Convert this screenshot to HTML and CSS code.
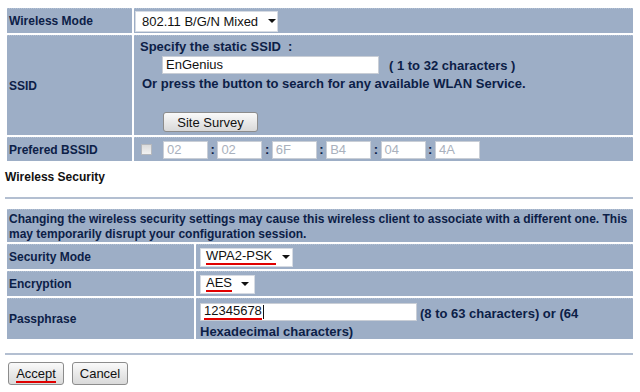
FILE: index.html
```html
<!DOCTYPE html>
<html>

<head>
    <meta charset="utf-8">
    <meta name="viewport" content="width=device-width">
    <title>Wireless Settings</title>
    <link rel="stylesheet" href="styles.css">
</head>

<body>
    <table class="grid basic">
        <colgroup>
            <col class="col-label">
            <col>
        </colgroup>
        <tr class="row-mode">
            <td class="label">Wireless Mode</td>
            <td class="value">
                <div class="select mode-select"><span>802.11 B/G/N Mixed</span><i class="arrow"></i></div>
            </td>
        </tr>
        <tr class="row-ssid">
            <td class="label">SSID</td>
            <td class="value ssid-cell">
                <div class="ssid-hint">Specify the static SSID &nbsp;:</div>
                <div class="ssid-line">
                    <div class="textbox ssid-box">EnGenius</div>
                    <span class="ssid-range">( 1 to 32 characters )</span>
                </div>
                <div class="ssid-note">Or press the button to search for any available WLAN Service.</div>
                <button class="btn survey">Site Survey</button>
            </td>
        </tr>
        <tr class="row-bssid">
            <td class="label">Prefered BSSID</td>
            <td class="value">
                <div class="bssid">
                    <span class="check"></span>
                    <div class="textbox octet">02</div><span class="colon">:</span>
                    <div class="textbox octet">02</div><span class="colon">:</span>
                    <div class="textbox octet">6F</div><span class="colon">:</span>
                    <div class="textbox octet">B4</div><span class="colon">:</span>
                    <div class="textbox octet">04</div><span class="colon">:</span>
                    <div class="textbox octet">4A</div>
                </div>
            </td>
        </tr>
    </table>

    <div class="section-title">Wireless Security</div>
    <div class="rule"></div>

    <table class="grid security">
        <colgroup>
            <col class="col-label-wide">
            <col>
        </colgroup>
        <tr class="row-warn">
            <td class="warn" colspan="2">Changing the wireless security settings may cause this wireless client to associate with a different one. This<br>may temporarily disrupt your configuration session.</td>
        </tr>
        <tr class="row-short">
            <td class="label">Security Mode</td>
            <td class="value pad">
                <div class="select sec-select"><span class="mark">WPA2-PSK&nbsp;</span><i class="arrow"></i></div>
            </td>
        </tr>
        <tr class="row-short">
            <td class="label">Encryption</td>
            <td class="value pad">
                <div class="select enc-select"><span class="mark">AES</span><i class="arrow"></i></div>
            </td>
        </tr>
        <tr class="row-pass">
            <td class="label">Passphrase</td>
            <td class="value pad pass-cell">
                <div class="pass-line">
                    <div class="textbox pass-box"><span class="mark">12345678</span><span class="caret"></span></div>
                    <span class="pass-range">(8 to 63 characters) or (64</span>
                </div>
                <div class="pass-more">Hexadecimal characters)</div>
            </td>
        </tr>
    </table>

    <div class="rule bottom"></div>

    <div class="actions">
        <button class="btn"><span class="mark">Accept</span></button>
        <button class="btn">Cancel</button>
    </div>
</body>

</html>
```

FILE: styles.css
```css
body {
    margin: 0;
    font-family: "Liberation Sans", Arial, sans-serif;
    font-size: 12px;
    color: #0c2047;
    background: #fff;
}

.grid {
    border-collapse: separate;
    border-spacing: 2px;
    margin-left: 5px;
    width: 630px;
    table-layout: fixed;
}

.col-label {
    width: 125px;
}

.col-label-wide {
    width: 187px;
}

.grid td {
    box-sizing: border-box;
    background-color: #9daec6;
    border-top: 1px dotted #b3c1d4;
    padding: 0;
    font-weight: bold;
    vertical-align: middle;
    white-space: nowrap;
}

.basic {
    margin-top: 6px;
}

.grid td.label {
    padding-left: 2px;
}

.row-mode td { height: 25px; }
.row-ssid td { height: 100px; }
.row-bssid td { height: 24px; }

/* fake drop-downs */
.select {
    display: inline-flex;
    align-items: center;
    box-sizing: border-box;
    background: #fff;
    border: 1px solid #d6dbe3;
    font-weight: normal;
    font-size: 13px;
    color: #111;
    height: 21px;
    padding-left: 6px;
    white-space: nowrap;
}

.select span {
    flex: none;
}

.arrow {
    flex: none;
    width: 0;
    height: 0;
    border-left: 4px solid transparent;
    border-right: 4px solid transparent;
    border-top: 4px solid #111;
    margin-left: 8px;
}

.mode-select {
    width: 143px;
    margin-left: 1px;
}

.mode-select .arrow {
    margin-left: 10px;
}

.sec-select,
.enc-select {
    height: 19px;
    padding-left: 5px;
}

.sec-select {
    width: 93px;
}

.sec-select .arrow {
    margin-left: 6px;
}

.enc-select {
    width: 55px;
}

.enc-select .arrow {
    margin-left: 9px;
}

.textbox {
    box-sizing: border-box;
    background: #fff;
    border: 1px solid #c9ced6;
    height: 18px;
    font-weight: normal;
    font-size: 13px;
    line-height: 16px;
    color: #111;
    padding-left: 3px;
}

/* SSID block */
.grid td.ssid-cell {
    vertical-align: top;
    padding-top: 3px;
    font-size: 13px;
}

.ssid-hint {
    line-height: 15px;
    margin-left: 6px;
}

.ssid-line {
    display: flex;
    align-items: center;
    margin-top: 2px;
    margin-left: 28px;
}

.ssid-box {
    width: 217px;
}

.ssid-range {
    margin-left: 10px;
}

.ssid-note {
    line-height: 15px;
    margin-top: 2px;
    margin-left: 8px;
}

.btn {
    font-family: "Liberation Sans", Arial, sans-serif;
    font-size: 13px;
    font-weight: normal;
    color: #111;
    background: linear-gradient(#fafafa, #e9e9e9 50%, #d9d9d9);
    border: 1px solid #8c8c8c;
    border-radius: 3px;
    padding: 0;
    height: 21px;
}

.survey {
    display: block;
    width: 95px;
    height: 20px;
    margin-top: 21px;
    margin-left: 29px;
}

/* BSSID row */
.bssid {
    display: flex;
    align-items: center;
}

.check {
    box-sizing: border-box;
    width: 11px;
    height: 11px;
    border: 1px solid #b5b8bd;
    background: linear-gradient(#dcdcdc, #f2f2f2);
    margin-left: 7px;
    margin-right: 11px;
}

.octet {
    width: 45px;
    color: #a9b1bd;
}

.colon {
    width: 9.4px;
    text-align: center;
    font-size: 13px;
    color: #0c2047;
}

/* security */
.section-title {
    margin-top: 7px;
    margin-left: 5px;
    font-weight: bold;
    line-height: 14px;
    color: #111;
}

.rule {
    height: 2px;
    margin-left: 5px;
    width: 628px;
    margin-top: 13px;
    background: #b3bfd1;
}

.security {
    margin-top: 8px;
}

.grid td.warn {
    height: 33px;
    line-height: 15px;
    padding: 2px 0 0 2px;
    vertical-align: top;
}

.row-short td { height: 25px; }
.row-pass td { height: 41px; }

.grid td.pad {
    padding-left: 4px;
}

.mark {
    border-bottom: 2px solid #e00000;
    line-height: 14px;
}

.grid td.pass-cell {
    vertical-align: top;
    padding-top: 4px;
    font-size: 13px;
}

.pass-line {
    display: flex;
    align-items: flex-end;
}

.pass-box {
    display: flex;
    align-items: center;
    width: 217px;
}

.pass-range {
    margin-left: 3px;
    line-height: 15px;
}

.pass-more {
    line-height: 15px;
    margin-top: 3px;
}

.caret {
    width: 1px;
    height: 14px;
    background: #111;
    margin-left: 1px;
}

.rule.bottom {
    margin-top: 12px;
}

.actions {
    display: flex;
    gap: 8px;
    margin-top: 7px;
    margin-left: 8px;
}

.actions .btn {
    width: 56px;
    height: 23px;
}
```
